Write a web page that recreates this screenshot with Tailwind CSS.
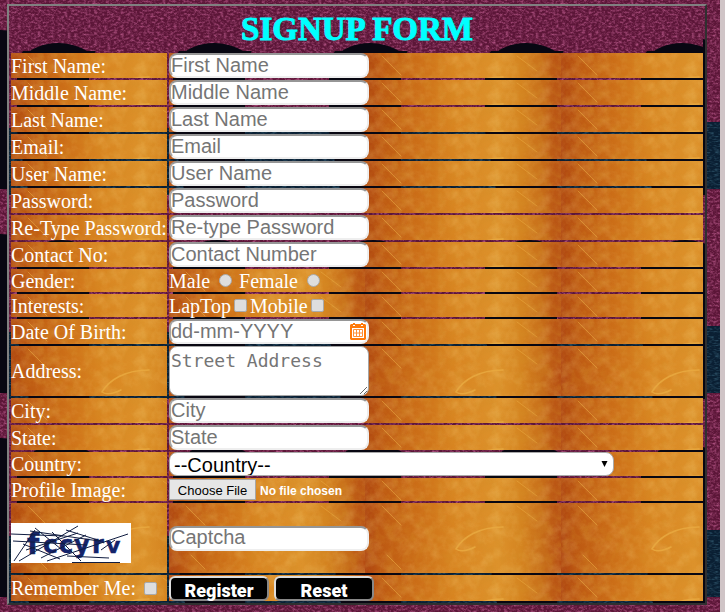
<!DOCTYPE html>
<html lang="en">
<head>
<meta charset="utf-8">
<meta name="viewport" content="width=device-width, initial-scale=1">
<title>Signup Form</title>
<script src="https://cdn.jsdelivr.net/npm/@tailwindcss/browser@4"></script>
<style>
/* Tiled textures, drawn as SVG: leather scales for the page, burnished wood for the cells */
:root {
  --leather: url("data:image/svg+xml,%3Csvg xmlns='http://www.w3.org/2000/svg' width='156' height='204'%3E%3Cfilter id='n' x='0' y='0' width='100%25' height='100%25'%3E%3CfeTurbulence type='fractalNoise' baseFrequency='.3 .5' numOctaves='3' seed='4' stitchTiles='stitch'/%3E%3CfeColorMatrix values='0 0 0 0 .72 0 0 0 0 .17 0 0 0 0 .4 2.2 0 0 0 -.9'/%3E%3C/filter%3E%3Cfilter id='b' x='0' y='0' width='100%25' height='100%25'%3E%3CfeTurbulence type='fractalNoise' baseFrequency='.2 .6' numOctaves='2' seed='9' stitchTiles='stitch'/%3E%3CfeColorMatrix values='0 0 0 0 .1 0 0 0 0 .3 0 0 0 0 .42 2 0 0 0 -.9'/%3E%3C/filter%3E%3Crect width='156' height='204' fill='%235c1638'/%3E%3Crect width='156' height='204' filter='url(%23n)' opacity='.6'/%3E%3Crect y='137' width='156' height='67' fill='%230a1f33'/%3E%3Crect y='137' width='156' height='67' filter='url(%23b)' opacity='.5'/%3E%3Cpath d='M0 45C14 45 26 50 36 58L28 72V204H0ZM156 45C142 45 130 50 118 60L112 70V140L124 204H156Z' fill='%23080712'/%3E%3C/svg%3E");
  --wood: url("data:image/svg+xml,%3Csvg xmlns='http://www.w3.org/2000/svg' width='196' height='110'%3E%3ClinearGradient id='g'%3E%3Cstop stop-color='%23ad430f'/%3E%3Cstop offset='.08' stop-color='%23bd5912'/%3E%3Cstop offset='.26' stop-color='%23cb6d17'/%3E%3Cstop offset='.45' stop-color='%23d88420'/%3E%3Cstop offset='.68' stop-color='%23dd922b'/%3E%3Cstop offset='.8' stop-color='%23d4831f'/%3E%3Cstop offset='.91' stop-color='%23c56a18'/%3E%3Cstop offset='1' stop-color='%23b54c12'/%3E%3C/linearGradient%3E%3Cfilter id='n' x='0' y='0' width='100%25' height='100%25'%3E%3CfeTurbulence type='fractalNoise' baseFrequency='.08' numOctaves='5' seed='7'/%3E%3CfeColorMatrix values='0 0 0 0 .95 0 0 0 0 .68 0 0 0 0 .22 2.2 0 0 0 -.9'/%3E%3C/filter%3E%3Cfilter id='d' x='0' y='0' width='100%25' height='100%25'%3E%3CfeTurbulence type='fractalNoise' baseFrequency='.1' numOctaves='4' seed='21'/%3E%3CfeColorMatrix values='0 0 0 0 .65 0 0 0 0 .27 0 0 0 0 .02 2.2 0 0 0 -.9'/%3E%3C/filter%3E%3Crect width='196' height='110' fill='url(%23g)'/%3E%3Crect width='196' height='110' filter='url(%23n)' opacity='.24'/%3E%3Crect width='196' height='110' filter='url(%23d)' opacity='.36'/%3E%3Cg fill='none' stroke='%23e9a940' stroke-linecap='round'%3E%3Cpath d='M17 3l19 19M152 3l20 15' opacity='.55'/%3E%3Cpath d='M138 24C114 24 98 34 91 46C97 50 104 47 110 44' stroke-width='1.500' opacity='.85'/%3E%3Cpath d='M22 52l14 14' opacity='.6'/%3E%3C/g%3E%3C/svg%3E");
}
</style>
</head>
<body class="min-h-screen bg-[#cfc4c6] pr-[5px] font-['Liberation_Serif',serif] text-[20px] leading-[22px] text-white">
<main class="min-h-screen bg-(image:--leather) bg-[position:0px_-15px] pt-1 pr-[13px] pb-1.5 pl-[7px]">
<form onsubmit="return false">
<table class="w-full border-separate border-spacing-[2px] border-2 border-t-[#808080] border-l-[#808080] border-r-[#303030] border-b-[#303030] bg-(image:--leather) bg-[position:52px_-15px] [&_td]:bg-(image:--wood) [&_td]:p-0 [&_td]:align-middle [&_td:first-child]:w-[156px] [&_td:first-child]:whitespace-nowrap">
<thead>
<tr><th colspan="2" class="h-[43px] bg-(image:--leather) bg-[position:47px_-10px] p-0"><h1 class="font-[Stencil,'Liberation_Serif',serif] text-[33px] leading-[43px] font-bold text-[#00ffff] [-webkit-text-stroke:1px_#00ffff]">SIGNUP FORM</h1></th></tr>
</thead>
<tbody>
<tr><td><label for="first">First Name:</label></td><td><input id="first" type="text" placeholder="First Name" class="block h-[25px] w-[200px] rounded-lg border-2 border-t-[#969696] border-l-[#a5a5a5] border-r-[#eeeeee] border-b-[#eeeeee] bg-white pb-px font-['Liberation_Sans',sans-serif] text-[20px] leading-[20px] text-black placeholder:text-[#757575]"></td></tr>
<tr><td><label for="middle">Middle Name:</label></td><td><input id="middle" type="text" placeholder="Middle Name" class="block h-[25px] w-[200px] rounded-lg border-2 border-t-[#969696] border-l-[#a5a5a5] border-r-[#eeeeee] border-b-[#eeeeee] bg-white pb-px font-['Liberation_Sans',sans-serif] text-[20px] leading-[20px] text-black placeholder:text-[#757575]"></td></tr>
<tr><td><label for="last">Last Name:</label></td><td><input id="last" type="text" placeholder="Last Name" class="block h-[25px] w-[200px] rounded-lg border-2 border-t-[#969696] border-l-[#a5a5a5] border-r-[#eeeeee] border-b-[#eeeeee] bg-white pb-px font-['Liberation_Sans',sans-serif] text-[20px] leading-[20px] text-black placeholder:text-[#757575]"></td></tr>
<tr><td><label for="email">Email:</label></td><td><input id="email" type="email" placeholder="Email" class="block h-[25px] w-[200px] rounded-lg border-2 border-t-[#969696] border-l-[#a5a5a5] border-r-[#eeeeee] border-b-[#eeeeee] bg-white pb-px font-['Liberation_Sans',sans-serif] text-[20px] leading-[20px] text-black placeholder:text-[#757575]"></td></tr>
<tr><td><label for="user">User Name:</label></td><td><input id="user" type="text" placeholder="User Name" class="block h-[25px] w-[200px] rounded-lg border-2 border-t-[#969696] border-l-[#a5a5a5] border-r-[#eeeeee] border-b-[#eeeeee] bg-white pb-px font-['Liberation_Sans',sans-serif] text-[20px] leading-[20px] text-black placeholder:text-[#757575]"></td></tr>
<tr><td><label for="pass">Password:</label></td><td><input id="pass" type="password" placeholder="Password" class="block h-[25px] w-[200px] rounded-lg border-2 border-t-[#969696] border-l-[#a5a5a5] border-r-[#eeeeee] border-b-[#eeeeee] bg-white pb-px font-['Liberation_Sans',sans-serif] text-[20px] leading-[20px] text-black placeholder:text-[#757575]"></td></tr>
<tr><td><label for="repass">Re-Type Password:</label></td><td><input id="repass" type="password" placeholder="Re-type Password" class="block h-[25px] w-[200px] rounded-lg border-2 border-t-[#969696] border-l-[#a5a5a5] border-r-[#eeeeee] border-b-[#eeeeee] bg-white pb-px font-['Liberation_Sans',sans-serif] text-[20px] leading-[20px] text-black placeholder:text-[#757575]"></td></tr>
<tr><td><label for="contact">Contact No:</label></td><td><input id="contact" type="tel" placeholder="Contact Number" class="block h-[25px] w-[200px] rounded-lg border-2 border-t-[#969696] border-l-[#a5a5a5] border-r-[#eeeeee] border-b-[#eeeeee] bg-white pb-px font-['Liberation_Sans',sans-serif] text-[20px] leading-[20px] text-black placeholder:text-[#757575]"></td></tr>
<tr><td>Gender:</td><td><div class="flex h-[23px] items-center"><label for="male">Male</label><input id="male" type="radio" name="gender" class="mr-[7px] ml-[9px] size-[13px] appearance-none rounded-full border border-[#a9a9a9] bg-[#dedede] checked:border-4 checked:border-[#555555]"><label for="female">Female</label><input id="female" type="radio" name="gender" class="ml-[9px] size-[13px] appearance-none rounded-full border border-[#a9a9a9] bg-[#dedede] checked:border-4 checked:border-[#555555]"></div></td></tr>
<tr><td>Interests:</td><td><div class="flex h-[23px] items-center"><label for="laptop">LapTop</label><input id="laptop" type="checkbox" class="mx-[3px] size-[13px] appearance-none rounded-xs border border-[#a9a9a9] bg-[#dedede] checked:bg-[#555555]"><label for="mobile">Mobile</label><input id="mobile" type="checkbox" class="mx-[3px] size-[13px] appearance-none rounded-xs border border-[#a9a9a9] bg-[#dedede] checked:bg-[#555555]"></div></td></tr>
<tr><td><label for="dob">Date Of Birth:</label></td><td><div class="relative w-[200px]"><input id="dob" type="text" placeholder="dd-mm-YYYY" class="block h-[25px] w-full rounded-lg border-2 border-t-[#969696] border-l-[#a5a5a5] border-r-[#eeeeee] border-b-[#eeeeee] bg-white pb-px font-['Liberation_Sans',sans-serif] text-[20px] leading-[20px] text-black placeholder:text-[#757575]"><button type="button" aria-label="Open calendar" class="absolute top-1 right-[3px]"><svg width="16" height="17" viewBox="0 0 16 17" class="block"><path fill="#ff7a0a" fill-rule="evenodd" d="M1 1H3V3H5V1H11V3H13V1H15L16 2V16L15 17H1L0 16V2ZM2 5V15H14V5Z"/><path fill="#ff7a0a" d="M3 0h2v2H3zM11 0h2v2h-2z"/><path fill="none" stroke="#ff9038" d="M3.500 6.500h9v7h-9zM3.500 10h9M6.500 6.500v7M9.500 6.500v7"/></svg></button></div></td></tr>
<tr><td><label for="address">Address:</label></td><td><textarea id="address" placeholder="Street Address" class="block h-[50px] w-[200px] resize rounded-lg border border-[#a5a5a5] bg-white px-px pt-[3px] font-['DejaVu_Sans_Mono',monospace] text-[18px] leading-[22px] text-black placeholder:text-[#757575]"></textarea></td></tr>
<tr><td><label for="city">City:</label></td><td><input id="city" type="text" placeholder="City" class="block h-[25px] w-[200px] rounded-lg border-2 border-t-[#969696] border-l-[#a5a5a5] border-r-[#eeeeee] border-b-[#eeeeee] bg-white pb-px font-['Liberation_Sans',sans-serif] text-[20px] leading-[20px] text-black placeholder:text-[#757575]"></td></tr>
<tr><td><label for="state">State:</label></td><td><input id="state" type="text" placeholder="State" class="block h-[25px] w-[200px] rounded-lg border-2 border-t-[#969696] border-l-[#a5a5a5] border-r-[#eeeeee] border-b-[#eeeeee] bg-white pb-px font-['Liberation_Sans',sans-serif] text-[20px] leading-[20px] text-black placeholder:text-[#757575]"></td></tr>
<tr><td><label for="country">Country:</label></td><td><div class="relative w-[445px] max-w-full"><select id="country" class="block h-6 w-full appearance-none rounded-lg border border-[#a9a9a9] bg-white pt-px pl-1 font-['Liberation_Sans',sans-serif] text-[20px] leading-[22px] text-black"><option>--Country--</option></select><svg width="7" height="7" viewBox="0 0 7 7" class="pointer-events-none absolute top-[9px] right-1.5"><path d="M.500 0H6.500L3.500 6Z" fill="#000"/></svg></div></td></tr>
<tr><td><label for="image">Profile Image:</label></td><td class="h-[23px]"><input id="image" type="file" class="block h-[21px] w-[300px] font-['Liberation_Sans',sans-serif] text-[12px] leading-[21px] font-bold text-white file:mr-1 file:h-[21px] file:w-[87px] file:border file:border-solid file:border-[#a6a6a6] file:bg-[#e6e6e6] file:p-0 file:text-[13px] file:font-normal file:text-black"></td></tr>
<tr><td class="h-[70px]"><svg role="img" aria-label="Captcha" width="120" height="40" viewBox="0 0 120 40" class="mt-2.5 block"><rect width="120" height="40" fill="#fff"/><g fill="#14246b" stroke="#14246b" stroke-width=".5" font-family="DejaVu Sans" font-weight="bold"><text x="16" y="31" font-size="28">f</text><text x="32" y="30" font-size="25">c</text><text x="48" y="30" font-size="24">c</text><text x="63" y="30" font-size="24">y</text><text x="81" y="30" font-size="24">r</text><text x="95" y="30" font-size="22">v</text></g><g fill="none" stroke="#101c40" stroke-width="1"><path d="M3 38L24 7M0 11L52 13M2 18L76 22M8 38L67 3M36 38L117 11M19 8L88 18M15 27L67 10M41 9L70 38M12 21L49 36M55 7L90 18M30 35L75 12M56 33L98 35M61 39.500H109M50 26L24 5M90 27L104 17"/></g></svg></td><td><input id="captcha" type="text" aria-label="Captcha" placeholder="Captcha" class="block h-[25px] w-[200px] rounded-lg border-2 border-t-[#969696] border-l-[#a5a5a5] border-r-[#eeeeee] border-b-[#eeeeee] bg-white pb-px font-['Liberation_Sans',sans-serif] text-[20px] leading-[20px] text-black placeholder:text-[#757575]"></td></tr>
<tr><td class="h-[26px]"><div class="flex items-center"><label for="remember">Remember Me:</label><input id="remember" type="checkbox" class="ml-2 size-[13px] appearance-none rounded-xs border border-[#a9a9a9] bg-[#dedede] checked:bg-[#555555]"></div></td><td><div class="flex gap-[5px]"><button type="submit" class="h-[25px] w-[100px] rounded-md border-2 border-t-[#dddddd] border-l-[#dddddd] border-r-[#888888] border-b-[#888888] bg-black pt-1 font-[Roboto,sans-serif] text-[18px] leading-[17px] font-black text-white">Register</button><button type="reset" class="h-[25px] w-[100px] rounded-md border-2 border-t-[#dddddd] border-l-[#dddddd] border-r-[#888888] border-b-[#888888] bg-black pt-1 font-[Roboto,sans-serif] text-[18px] leading-[17px] font-black text-white">Reset</button></div></td></tr>
</tbody>
</table>
</form>
</main>
</body>
</html>
